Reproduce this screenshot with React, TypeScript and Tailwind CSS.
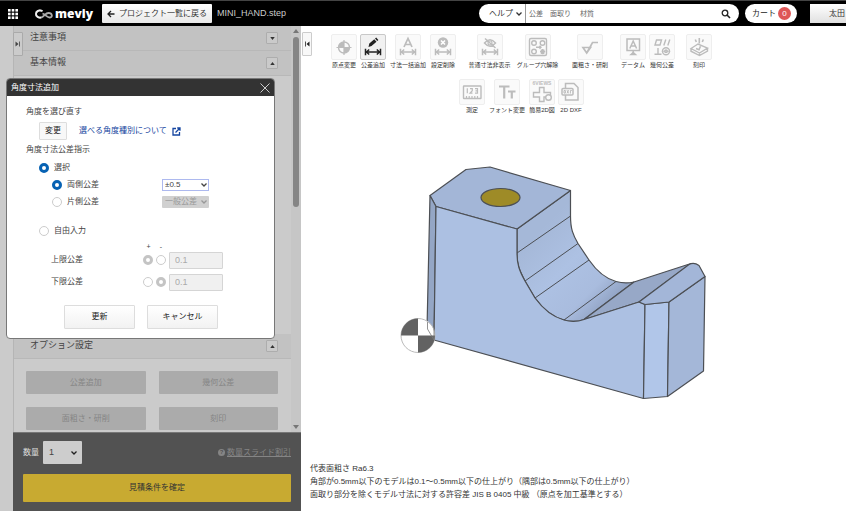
import React from "react";
import clsx from "clsx";

const JP = "font-['Liberation_Sans','Noto_Sans_CJK_JP',sans-serif]";

type Tool = {
  label: string;
  width: string;
  active?: boolean;
  icon: React.ReactNode;
};

const Arrow = () => (
  <path
    d="M5.500 14.800v6.400M20.500 14.800v6.400M6.500 18h13M9.200 15.500 6.500 18l2.700 2.500M16.800 15.500l2.700 2.500-2.700 2.500"
    fill="none"
    stroke="currentColor"
    strokeWidth="1.500"
  />
);

const GROUPS: Tool[][] = [
  [
    {
      label: "原点変更",
      width: "w-[26px]",
      icon: (
        <>
          <circle cx="13" cy="13.500" r="5.500" fill="none" stroke="currentColor" strokeWidth="1.400" />
          <path d="M13 13.500V8a5.500 5.500 0 0 0-5.500 5.500zM13 13.500V19a5.500 5.500 0 0 0 5.500-5.500z" fill="currentColor" />
          <path d="M13 6v15M5.500 13.500h15" stroke="currentColor" strokeWidth="1.200" />
        </>
      ),
    },
    {
      label: "公差追加",
      width: "w-[26px]",
      active: true,
      icon: (
        <>
          <path d="M8.500 13l.8-3.600 5-4.200 2.200 2.500-5 4.200zM15 4.600l1.200-1 2.200 2.500-1.200 1z" fill="currentColor" />
          <Arrow />
        </>
      ),
    },
    {
      label: "寸法一括追加",
      width: "w-[38px]",
      icon: (
        <>
          <path d="M9 13 13 4.500l4 8.500M10.500 10.500h5" fill="none" stroke="currentColor" strokeWidth="1.700" />
          <Arrow />
        </>
      ),
    },
    {
      label: "設定削除",
      width: "w-[26px]",
      icon: (
        <>
          <circle cx="13" cy="8.500" r="5.200" fill="currentColor" />
          <path d="m11 6.500 4 4m0-4-4 4" stroke="#fff" strokeWidth="1.600" />
          <Arrow />
        </>
      ),
    },
  ],
  [
    {
      label: "普通寸法非表示",
      width: "w-[45px]",
      icon: (
        <>
          <path d="M7.500 9q5.500-6.500 11 0-5.500 6.500-11 0zM8 4.500l10.500 9.500" fill="none" stroke="currentColor" strokeWidth="1.500" />
          <circle cx="13" cy="9" r="2" fill="none" stroke="currentColor" strokeWidth="1.200" />
          <Arrow />
        </>
      ),
    },
    {
      label: "グループ穴解除",
      width: "w-[45px]",
      icon: (
        <g fill="none" stroke="currentColor" strokeWidth="1.400">
          <rect x="4.500" y="4.500" width="17" height="17" rx="1.500" />
          <circle cx="9" cy="9" r="2.300" />
          <circle cx="17.500" cy="9" r="2.300" />
          <circle cx="9" cy="17.500" r="2.300" />
          <path d="M11 13.200h5M14.500 11.700l1.500 1.500-1.500 1.500M15.800 15.800l3.600 3.600m0-3.600-3.600 3.600M17.600 15v5.200M15 17.600h5.200" />
        </g>
      ),
    },
  ],
  [
    {
      label: "面粗さ・研削",
      width: "w-[38px]",
      icon: (
        <path d="M6 13.500h7.500L9.700 19zM9.700 19 15.500 8.500H21" fill="none" stroke="currentColor" strokeWidth="1.700" />
      ),
    },
  ],
  [
    {
      label: "データム",
      width: "w-[26px]",
      icon: (
        <g fill="none" stroke="currentColor" strokeWidth="1.500">
          <rect x="7" y="5" width="12.500" height="11.500" />
          <path d="m9.800 14.500 3.400-7.500 3.400 7.500M11 12h4.500M13.200 16.500V20" />
          <path d="m11 20.500 2.200-2 2.200 2z" fill="currentColor" />
        </g>
      ),
    },
    {
      label: "幾何公差",
      width: "w-[26px]",
      icon: (
        <g fill="none" stroke="currentColor" strokeWidth="1.400">
          <path d="M7.500 6h5L11 11H6zM16.800 5.500l-2 6M20.800 5.500l-2 6M9 14v6M5.500 20.200h7" />
          <circle cx="17" cy="17.300" r="3.500" />
          <circle cx="17" cy="17.300" r="1.300" />
          <path d="M12.800 17.300h8.400" strokeWidth=".8" />
        </g>
      ),
    },
  ],
  [
    {
      label: "刻印",
      width: "w-[26px]",
      icon: (
        <g fill="none" stroke="currentColor" strokeWidth="1.400">
          <path d="m5 14.500 7-4.500 9.500 4-8 5zM5 14.500v2.700l8.500 4.300 8-4.500v-3M13.500 19v2.500" />
          <path d="m10 14.500 3 1.300 1.500-3.500M9.300 5.500l1 2.500M13.300 4v5.500M17.300 5.500l-1 2.500" strokeWidth="1.600" />
        </g>
      ),
    },
  ],
];

const SECOND_ROW: Tool[] = [
  {
    label: "測定",
    width: "w-[26px]",
    icon: (
      <g fill="none" stroke="currentColor" strokeWidth="1.400">
        <rect x="4.500" y="7" width="17.500" height="12.500" rx=".5" />
        <path d="M7.500 19.500V17M10.200 19.500V17M13 19.500V17M15.800 19.500V17M18.500 19.500V17" strokeWidth="1.200" />
        <path d="M8.300 9.200v5M11 9.700h2.300v2L11 14.200h2.500M16 9.700h2.500v4.500H16M16.500 11.900h2" strokeWidth="1.200" />
      </g>
    ),
  },
  {
    label: "フォント変更",
    width: "w-[38px]",
    icon: (
      <path
        d="M5 7.500h10.500M10.200 7.500v12M14 12.500h7.500M17.800 12.500v7"
        fill="none"
        stroke="currentColor"
        strokeWidth="2.200"
      />
    ),
  },
  {
    label: "簡易2D図",
    width: "w-[26px]",
    icon: (
      <>
        <text x="13" y="6" textAnchor="middle" fontSize="5" fontWeight="700" fill="currentColor">
          6VIEWS
        </text>
        <g fill="none" stroke="currentColor" strokeWidth="1.400">
          <path d="M10.500 8.500H15v5h6.500V18H15v4.500h-4.500V18H4.500v-4.500h6z" />
          <circle cx="19.500" cy="18.500" r="2.800" fill="#fafafa" />
        </g>
      </>
    ),
  },
  {
    label: "2D DXF",
    width: "w-[26px]",
    icon: (
      <g fill="none" stroke="currentColor" strokeWidth="1.500">
        <path d="M7.500 9V4.500h8.500l4 4V21H7.500v-5" />
        <rect x="4" y="9.500" width="11" height="6.500" rx="1" fill="#fafafa" />
        <path d="M6 11.500v2.600h1.400v-2.600zM9 11.200l1.600 3.200M10.600 11.200 9 14.400M12.400 14.500v-3h1.400" strokeWidth="1" />
      </g>
    ),
  },
];

function ToolButton({ tool }: { tool: Tool }) {
  return (
    <button type="button" className={clsx("flex flex-col items-center", tool.width)}>
      <span
        className={clsx(
          "block size-[26px] rounded-[2px] border",
          tool.active
            ? "border-[#c8c8c8] bg-[#f1f1f1] text-[#222]"
            : "border-[#eeeeee] bg-[#fafafa] text-[#bcbcbc]"
        )}
      >
        <svg viewBox="1 1 24 24" className="size-6" aria-hidden="true">
          {tool.icon}
        </svg>
      </span>
      <span className="text-[6px] leading-[10px] whitespace-nowrap text-[#333]">{tool.label}</span>
    </button>
  );
}

function Chevron({ className = "" }: { className?: string }) {
  return (
    <svg
      viewBox="0 0 8 8"
      className={clsx("pointer-events-none absolute top-1/2 size-2 -translate-y-1/2", className)}
      aria-hidden="true"
    >
      <path d="m1.500 2.500 2.500 2.500 2.500-2.500" fill="none" stroke="currentColor" strokeWidth="1.300" />
    </svg>
  );
}

function Header() {
  return (
    <header className="flex h-[26px] shrink-0 items-center border-t border-[#444] bg-black text-white">
      <button type="button" aria-label="メニュー" className="ml-2">
        <svg viewBox="0 0 10 10" className="size-[10px]" fill="#fff">
          {[0, 3.7, 7.4].map((y) =>
            [0, 3.7, 7.4].map((x) => <rect key={`${x}-${y}`} x={x} y={y} width="2.6" height="2.6" />)
          )}
        </svg>
      </button>
      <a href="#" className="ml-[17px] flex w-[58px] items-center gap-[2px]">
        <svg viewBox="0 0 18 10" className="h-[10px] w-[18px] shrink-0" fill="none" aria-hidden="true">
          <path d="M7.500 2C4 .5 1 2 1 5c0 3.500 4.500 4.500 7 2.500 2-1.500 3-3.500 5.500-3.500 4 0 4.500 4.500 1 4.500C12 8.500 10.500 5.500 7.500 4.500" stroke="#aaa" strokeWidth="1.800" />
          <path d="M7.500 2C4 .5 1 2 1 5c0 3 3 4 5 3.300" stroke="#eee" strokeWidth="1.800" />
        </svg>
        <span className="font-['Open_Sans',sans-serif] text-[12px] leading-4 font-extrabold">meviy</span>
      </a>
      <button
        type="button"
        className="ml-[9px] flex h-[19px] w-[110px] shrink-0 items-center justify-center gap-1 rounded-[1px] bg-linear-to-b from-white to-[#e8e8e8] text-[8px] whitespace-nowrap text-[#333]"
      >
        <svg viewBox="0 0 8 8" className="size-2" aria-hidden="true">
          <path d="M7.500 4H1.500M4 1 1 4l3 3" fill="none" stroke="#222" strokeWidth="1.300" />
        </svg>
        プロジェクト一覧に戻る
      </button>
      <span className="ml-[5px] text-[9px] text-[#ccc]">MINI_HAND.step</span>
      <div className="ml-auto flex h-[19px] w-[260px] items-center rounded-full bg-white text-[#333]">
        <button type="button" className="relative h-full w-[47px] border-r border-[#999] pl-[10px] text-left text-[8px]">
          ヘルプ
          <Chevron className="right-[2px]" />
        </button>
        <input
          type="search"
          aria-label="検索"
          placeholder="公差　面取り　 材質"
          className="h-full min-w-0 flex-1 px-[3px] text-[7px] outline-none placeholder:text-[#666]"
        />
        <button type="button" aria-label="検索する" className="mr-2">
          <svg viewBox="0 0 10 10" className="size-[10px]" fill="none" stroke="#222">
            <circle cx="4" cy="4" r="2.800" strokeWidth="1.300" />
            <path d="m6 6 3 3" strokeWidth="1.600" />
          </svg>
        </button>
      </div>
      <a href="#" className="ml-[6px] flex h-[19px] w-[52px] items-center justify-between rounded-full bg-white pr-[6px] pl-[7px] text-[8px] whitespace-nowrap text-[#222]">
        カート
        <span className="flex size-[13px] items-center justify-center rounded-full bg-[#de5757] text-[8px] text-white">
          0
        </span>
      </a>
      <button type="button" className="ml-[13px] h-[19px] w-9 bg-linear-to-b from-white to-[#e0e0e0] pr-px text-right text-[8px] text-[#333]">
        太田
      </button>
    </header>
  );
}

function Section({ title, open }: { title: string; open: boolean }) {
  return (
    <div className="flex h-[25px] shrink-0 items-center justify-between border-b border-[#b8b8b8] bg-[#c2c2c2] pr-[13px] pl-4 text-[9px] text-[#444]">
      {title}
      <button
        type="button"
        aria-label={title}
        aria-expanded={open}
        className="flex size-3 items-center justify-center rounded-[1px] border border-[#adadad] bg-[#cacaca]"
      >
        <svg viewBox="0 0 6 4" className="h-[3px] w-[5px]" fill="#333">
          <path d={open ? "M0 4h6L3 0z" : "M0 0h6L3 4z"} />
        </svg>
      </button>
    </div>
  );
}

function Sidebar() {
  return (
    <aside className="relative flex w-[301px] shrink-0 flex-col bg-[#cbcbcb] pl-[13px]">
      <div className="flex min-h-0 flex-1">
        <div className="flex min-w-0 flex-1 flex-col overflow-hidden border-l border-[#b5b5b5]">
          <Section title="注意事項" open={false} />
          <Section title="基本情報" open />
          <div className="h-[258px] shrink-0" />
          <Section title="オプション設定" open />
          <div className="grid grid-cols-2 gap-x-[13px] gap-y-[13px] py-3 pr-[13px] pl-3">
            {["公差追加", "幾何公差", "面粗さ・研削", "刻印"].map((label) => (
              <button
                key={label}
                type="button"
                disabled
                className="h-[23px] rounded-[1px] bg-[#ababab] text-[8px] text-[#858585]"
              >
                {label}
              </button>
            ))}
          </div>
        </div>
        <div className="flex w-[10px] flex-col items-center bg-[#c6c6c6] py-[3px]">
          <svg viewBox="0 0 6 4" className="h-1 w-[6px]" fill="#777">
            <path d="M0 4h6L3 0z" />
          </svg>
          <div className="mt-[4px] h-[170px] w-[6px] rounded-full bg-[#858585]" />
          <svg viewBox="0 0 6 4" className="mt-auto h-1 w-[6px]" fill="#777">
            <path d="M0 0h6L3 4z" />
          </svg>
        </div>
      </div>
      <div className="h-[79px] shrink-0 border-t border-[#777] bg-[#525252] px-[10px] pt-2">
        <div className="flex h-[23px] items-center">
          <label htmlFor="qty" className="w-5 text-[8px] whitespace-nowrap text-[#ddd]">
            数量
          </label>
          <span className="relative">
            <select
              id="qty"
              className="block h-[23px] w-[39px] appearance-none rounded-[1px] bg-[#cdcdcd] pl-[6px] text-[9px] text-[#444]"
            >
              <option>1</option>
            </select>
            <Chevron className="right-1 text-[#222]" />
          </span>
          <a href="#" className="ml-auto flex items-center gap-[2px] text-[8px] text-[#858585]">
            <span className="flex size-[7px] items-center justify-center rounded-full bg-[#858585] text-[6px] font-bold text-[#525252]">
              ?
            </span>
            <span className="underline">数量スライド割引</span>
          </a>
        </div>
        <button type="button" className="mt-[10px] h-7 w-full rounded-[1px] bg-[#c8aa31] text-[8px] text-[#333]">
          見積条件を確定
        </button>
      </div>
      <button
        type="button"
        aria-label="パネルを開く"
        className="absolute top-[6px] left-[13px] flex h-6 w-[10px] items-center justify-center rounded-[1px] border border-[#aaa] bg-[#cbcbcb]"
      >
        <svg viewBox="0 0 6 6" className="size-[6px]" fill="#444">
          <path d="M.5.5 3.500 3l-3 2.500zM4.200.5h.8v5h-.8z" />
        </svg>
      </button>
    </aside>
  );
}

type RadioProps = {
  name: string;
  label: string;
  hideLabel?: boolean;
  checked?: boolean;
  disabled?: boolean;
};

function Radio({ name, label, hideLabel, checked, disabled }: RadioProps) {
  return (
    <label className="flex items-center gap-[5px] whitespace-nowrap">
      <input
        type="radio"
        name={name}
        aria-label={label}
        defaultChecked={checked}
        disabled={disabled}
        className="size-[10px] shrink-0 appearance-none rounded-full border border-[#ccc] bg-white checked:border-[3px] checked:border-[#0762b3] disabled:checked:border-[#c4c4c4]"
      />
      {!hideLabel && <span>{label}</span>}
    </label>
  );
}

function LimitRow({ id, label, plus }: { id: string; label: string; plus: boolean }) {
  return (
    <div className="flex h-[22px] items-center">
      <label htmlFor={id} className="w-[92px]">
        {label}
      </label>
      <div className="flex w-[26px] gap-[3px]">
        <Radio name={id} label={`${label} +`} hideLabel checked={plus} disabled />
        <Radio name={id} label={`${label} -`} hideLabel checked={!plus} disabled />
      </div>
      <input
        id={id}
        disabled
        defaultValue="0.1"
        className="h-[17px] w-[54px] rounded-[1px] border border-[#d5d5d5] bg-[#f0f0f0] px-[5px] text-[9px] text-[#aaa]"
      />
    </div>
  );
}

function AngleDialog() {
  return (
    <div
      role="dialog"
      aria-label="角度寸法追加"
      className="absolute top-[78px] left-[6px] w-[269px] overflow-hidden rounded-[4px] border border-[#777] bg-white text-[8px] leading-[12px] text-[#444]"
    >
      <div className="flex h-[17px] items-center justify-between bg-[#333] pr-1 pl-1 text-white">
        <h2>角度寸法追加</h2>
        <button type="button" aria-label="閉じる">
          <svg viewBox="0 0 10 10" className="size-[10px]" stroke="#ccc">
            <path d="m.5.5 9 9m0-9-9 9" />
          </svg>
        </button>
      </div>
      <div className="pt-[10px] pb-[9px] pl-[19px]">
        <p>角度を選び直す</p>
        <div className="mt-1 flex items-center gap-3 pl-[13px]">
          <button type="button" className="h-[18px] w-7 rounded-[1px] border border-[#ddd] bg-[#f8f8f8] text-[#222]">
            変更
          </button>
          <a href="#" className="flex items-center gap-[5px] text-[#1545a0]">
            選べる角度種別について
            <svg viewBox="0 0 9 9" className="size-[9px]" fill="none" stroke="currentColor" strokeWidth="1.300" aria-hidden="true">
              <path d="M4 1.500H1v6.500h6.500V5M3.500 5.500l4.500-4.500M5.200 1H8v2.800" />
            </svg>
          </a>
        </div>
        <p className="mt-1">角度寸法公差指示</p>
        <div className="flex flex-col pt-[3px] pl-[13px]">
          <div className="flex h-[17px] items-center">
            <Radio name="mode" label="選択" checked />
          </div>
          <div className="flex h-[17px] items-center pl-[13px]">
            <div className="w-[110px]">
              <Radio name="side" label="両側公差" checked />
            </div>
            <span className="relative">
              <select aria-label="両側公差の値" className="block h-3 w-[47px] appearance-none border border-[#adb9ef] bg-white pl-[2px] text-[8px] leading-[10px]">
                <option>±0.5</option>
              </select>
              <Chevron className="right-[1px]" />
            </span>
          </div>
          <div className="flex h-[17px] items-center pl-[13px]">
            <div className="w-[110px]">
              <Radio name="side" label="片側公差" />
            </div>
            <span className="relative text-[#999]">
              <select
                aria-label="片側公差の値"
                disabled
                className="block h-3 w-[47px] appearance-none rounded-[1px] bg-[#d0d0d0] pl-[3px] text-[8px] leading-[12px]"
              >
                <option>一般公差</option>
              </select>
              <Chevron className="right-[1px]" />
            </span>
          </div>
          <div className="mt-3 flex h-[18px] items-center">
            <Radio name="mode" label="自由入力" />
          </div>
          <div className="mt-[3px] flex h-2 w-[131px] justify-end gap-[9px] pr-2 text-[7px] leading-[8px]">
            <span>+</span>
            <span>-</span>
          </div>
          <div className="-mt-[2px] pl-3">
            <LimitRow id="upper" label="上限公差" plus />
            <LimitRow id="lower" label="下限公差" plus={false} />
          </div>
        </div>
        <div className="mt-3 flex gap-3 pl-[38px]">
          {["更新", "キャンセル"].map((label) => (
            <button
              key={label}
              type="button"
              className="h-6 w-[71px] rounded-[1px] border border-[#ddd] bg-linear-to-b from-white to-[#f2f2f2] text-[#222]"
            >
              {label}
            </button>
          ))}
        </div>
      </div>
    </div>
  );
}

function PartModel() {
  return (
    <svg viewBox="400 166 307 235" className="h-[235px] w-[307px]" role="img" aria-label="MINI_HAND.step">
      <defs>
        <linearGradient id="bend" x1="530" y1="240" x2="600" y2="310" gradientUnits="userSpaceOnUse">
          <stop offset="0" stopColor="#a5b8d8" />
          <stop offset=".45" stopColor="#adc1e3" />
          <stop offset=".8" stopColor="#a9bcde" />
          <stop offset="1" stopColor="#94a6c7" />
        </linearGradient>
      </defs>
      <g stroke="#4c4f54" strokeWidth="1.200" strokeLinejoin="round">
        <path
          d="M570.500 190.500V216C570.500 229 573 235 578 243.500L589 260C598 273 607 279 616 281.500Q625 284 634 282L584 319.500Q574 323 564 320C553 317 543 309 535 298L525 281C519 270 517 264 517 253V229Z"
          fill="url(#bend)"
        />
        <path d="M584 319.500 634 282 691 263.500 639 302Z" fill="#97a8c7" />
        <path d="M430 195.500 466 169.500 490 167 570.500 190.500 517 229 436 206.500Z" fill="#a3b6d7" />
        <path d="M430 195.500 436 206.500 434 340 427 329Z" fill="#94a6c5" />
        <path
          d="M436 206.500 517 229V253C517 264 519 270 525 281L535 298C543 309 553 317 564 320Q574 323 584 319.500L639 302 645 304.500 643.500 398.500 434 340Z"
          fill="#acc0e2"
        />
        <path d="M645 304.500 669 302 667.500 396.500 643.500 398.500Z" fill="#b1c6e9" />
        <path d="M669 302 705 276.500 703.500 371 667.500 396.500Z" fill="#a4b7d8" />
        <path d="M639 302 689 264.500Q694 262 699 265.500L705 276.500 669 302 645 304.500Z" fill="#a3b6d8" />
        <path d="M517 253 570.500 216M525 281 578 243.500M535 298 589 260M564 320 616 281.500" fill="none" strokeWidth="1" />
        <ellipse cx="500.500" cy="197.500" rx="19.500" ry="9" fill="#9e8b27" />
      </g>
      <circle cx="418" cy="335.500" r="17" fill="#fff" stroke="#bbb" />
      <path d="M418 335.500V318.500a17 17 0 0 0-17 17zM418 335.500v17a17 17 0 0 0 17-17z" fill="#626262" />
      <path d="M427.500 322V329L434 340V320" fill="none" stroke="#777" strokeWidth=".8" />
    </svg>
  );
}

export default function App() {
  return (
    <div className={clsx("relative flex h-screen flex-col bg-white pr-[3px] pb-[5px]", JP)} lang="ja">
      <Header />
      <div className="flex min-h-0 flex-1">
        <Sidebar />
        <main className="relative flex min-w-0 flex-1 flex-col">
          <button
            type="button"
            aria-label="パネルを閉じる"
            className="absolute top-[6px] left-px flex h-6 w-[10px] items-center justify-center rounded-[1px] border border-[#ccc] bg-[#f8f8f8]"
          >
            <svg viewBox="0 0 6 6" className="size-[6px]" fill="#222">
              <path d="M5.500.5 2.500 3l3 2.500zM1 .5h.8v5H1z" />
            </svg>
          </button>
          <div className="flex flex-col items-center gap-[9px] pt-2 pr-[104px]">
            <div className="flex gap-[11px]">
              {GROUPS.map((group, i) => (
                <div key={i} className="flex gap-[3px]">
                  {group.map((tool) => (
                    <ToolButton key={tool.label} tool={tool} />
                  ))}
                </div>
              ))}
            </div>
            <div className="flex gap-[3px]">
              {SECOND_ROW.map((tool) => (
                <ToolButton key={tool.label} tool={tool} />
              ))}
            </div>
          </div>
          <div className="mt-[51px] pl-[99px]">
            <PartModel />
          </div>
          <div className="mt-auto pb-[10px] pl-[9px] text-[8px] leading-[13px] text-[#333]">
            <p>代表面粗さ Ra6.3</p>
            <p>角部が0.5mm以下のモデルは0.1～0.5mm以下の仕上がり（隅部は0.5mm以下の仕上がり）</p>
            <p>面取り部分を除くモデル寸法に対する許容差 JIS B 0405 中級 （原点を加工基準とする）</p>
          </div>
        </main>
      </div>
      <AngleDialog />
    </div>
  );
}
